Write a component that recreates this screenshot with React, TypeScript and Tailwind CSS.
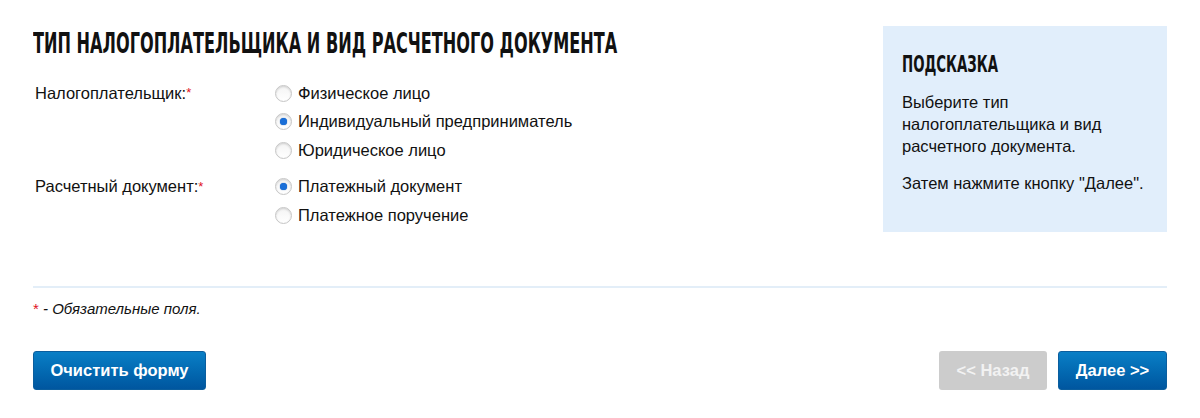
import { FC } from "react";

const Radio: FC<{ checked?: boolean; label: string }> = ({ checked, label }) => (
  <label className="flex items-center h-[28.5px] gap-[6px]">
    <span className="w-[17px] h-[17px] rounded-full border border-[#c6c6c6] bg-gradient-to-b from-[#f4f4f4] to-white shadow-[inset_0_1px_2px_rgba(0,0,0,0.15)] flex items-center justify-center">
      {checked && (
        <span className="w-[7px] h-[7px] rounded-full bg-[#1a6fd8] shadow-[0_0_1px_#0a4fa8]" />
      )}
    </span>
    <span>{label}</span>
  </label>
);

const Field: FC<{ label: string; children: React.ReactNode }> = ({ label, children }) => (
  <div className="flex">
    <div className="w-[240px] h-[28.5px] flex items-center">
      {label}
      <span className="text-[#e0141e] self-start mt-[4px] text-[13px]">*</span>
    </div>
    <div className="flex flex-col">{children}</div>
  </div>
);

const condensed = { fontFamily: '"DejaVu Sans Condensed", "DejaVu Sans", sans-serif' };

const btnBlue =
  "h-[39px] rounded-[3px] bg-gradient-to-b from-[#0a7fc6] to-[#00569f] text-white font-bold text-[16.5px] border border-[#0b5e9e]";

export default function App() {
  return (
    <div
      className="w-[1200px] h-[418px] bg-white text-[#111] text-[16.5px] px-[33px] pt-[26px]"
      style={{ fontFamily: '"Liberation Sans", Arial, sans-serif' }}
    >
      <div className="flex justify-between">
        <div className="flex-1 min-w-0">
          <h1
            className="text-[28px] leading-[36px] font-bold uppercase text-[#111] origin-left scale-x-[0.64] whitespace-nowrap"
            style={condensed}
          >
            Тип налогоплательщика и вид расчетного документа
          </h1>
          <div className="mt-[17px] pl-[2px] flex flex-col gap-[8px]">
            <Field label="Налогоплательщик:">
              <Radio label="Физическое лицо" />
              <Radio checked label="Индивидуальный предприниматель" />
              <Radio label="Юридическое лицо" />
            </Field>
            <Field label="Расчетный документ:">
              <Radio checked label="Платежный документ" />
              <Radio label="Платежное поручение" />
            </Field>
          </div>
        </div>
        <div className="w-[284px] shrink-0 h-[206px] bg-[#e1eefb] pl-[19px] pr-[14px] pt-[24px] leading-[22px]">
          <h2
            className="text-[23.5px] leading-[28px] font-bold uppercase origin-left scale-x-[0.63] whitespace-nowrap"
            style={condensed}
          >
            Подсказка
          </h2>
          <p className="mt-[13px] pr-[40px]">Выберите тип налогоплательщика и вид расчетного документа.</p>
          <p className="mt-[15px] whitespace-nowrap">Затем нажмите кнопку "Далее".</p>
        </div>
      </div>
      <div className="mt-[54px] h-[2px] bg-[#e3eef8]" />
      <p className="mt-[10px] text-[15px] italic">
        <span className="text-[#e0141e] not-italic">*</span> - Обязательные поля.
      </p>
      <div className="mt-[30px] flex justify-between">
        <button className={`${btnBlue} w-[173px]`}>Очистить форму</button>
        <div className="flex gap-[11px]">
          <button className="h-[39px] w-[108px] rounded-[3px] bg-[#cccccc] text-[#f2f2f2] font-bold text-[16.5px]">
            &lt;&lt; Назад
          </button>
          <button className={`${btnBlue} w-[109px]`}>Далее &gt;&gt;</button>
        </div>
      </div>
    </div>
  );
}
